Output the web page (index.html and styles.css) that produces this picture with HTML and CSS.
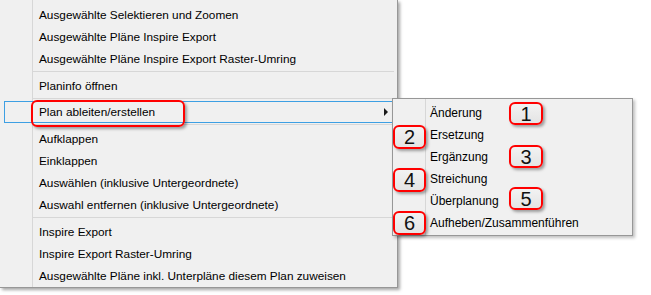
FILE: index.html
```html
<!DOCTYPE html>
<html lang="de">
<head>
<meta charset="utf-8">
<title>Kontextmenü</title>
<link rel="stylesheet" href="styles.css">
</head>
<body>
<div class="stage">
  <div class="menu main-menu">
    <div class="item">Ausgewählte Selektieren und Zoomen</div>
    <div class="item">Ausgewählte Pläne Inspire Export</div>
    <div class="item">Ausgewählte Pläne Inspire Export Raster-Umring</div>
    <div class="sep"></div>
    <div class="item">Planinfo öffnen</div>
    <div class="sep sep-short"></div>
    <div class="item item-active"><span>Plan ableiten/erstellen</span><span class="arrow"></span></div>
    <div class="sep"></div>
    <div class="item">Aufklappen</div>
    <div class="item">Einklappen</div>
    <div class="item">Auswählen (inklusive Untergeordnete)</div>
    <div class="item">Auswahl entfernen (inklusive Untergeordnete)</div>
    <div class="sep"></div>
    <div class="item">Inspire Export</div>
    <div class="item">Inspire Export Raster-Umring</div>
    <div class="item">Ausgewählte Pläne inkl. Unterpläne diesem Plan zuweisen</div>
  </div>

  <div class="menu sub-menu">
    <div class="item sub-item">Änderung</div>
    <div class="item sub-item">Ersetzung</div>
    <div class="item sub-item">Ergänzung</div>
    <div class="item sub-item">Streichung</div>
    <div class="item sub-item">Überplanung</div>
    <div class="item sub-item">Aufheben/Zusammenführen</div>
  </div>

  <div class="callout callout-main"></div>
  <div class="badge badge-right b1">1</div>
  <div class="badge badge-left b2">2</div>
  <div class="badge badge-right b3">3</div>
  <div class="badge badge-left b4">4</div>
  <div class="badge badge-right b5">5</div>
  <div class="badge badge-left b6">6</div>
</div>
</body>
</html>
```

FILE: styles.css
```css
* { box-sizing: border-box; }

html, body {
  margin: 0;
  padding: 0;
  background: #ffffff;
}

body {
  font-family: "Liberation Sans", Arial, sans-serif;
  font-size: 12px;
  color: #000;
}

.stage {
  position: relative;
  width: 651px;
  height: 295px;
  overflow: hidden;
}

.menu {
  background-color: #f0f0f0;
  background-image: linear-gradient(to right,
    transparent 32px, #d7d7d7 32px, #d7d7d7 33px, transparent 33px);
  display: flex;
  flex-direction: column;
}

.main-menu {
  width: 398px;
  padding-top: 4px;
  border-right: 1px solid #979797;
  border-bottom: 1px solid #979797;
  box-shadow: 2px 2px 3px rgba(0, 0, 0, 0.35);
  font-size: 11.8px;
}

.item {
  height: 22px;
  line-height: 22px;
  padding-left: 39px;
  white-space: nowrap;
}

.sep {
  height: 5px;
  padding-top: 1px;
  margin-left: 33px;
  margin-right: 3px;
}
.sep::before {
  content: "";
  display: block;
  height: 1px;
  background: #d7d7d7;
}
.sep-short { height: 4px; }

.item-active {
  display: flex;
  align-items: center;
  margin-left: 4px;
  margin-right: 4px;
  padding-left: 34px;
  padding-right: 4px;
  border: 1px solid #3d9fe3;
  line-height: 20px;
}

.arrow {
  margin-left: auto;
  width: 0;
  height: 0;
  border-top: 4px solid transparent;
  border-bottom: 4px solid transparent;
  border-left: 4px solid #1a1a1a;
}

/* flyout submenu */
.sub-menu {
  position: absolute;
  left: 392px;
  top: 98px;
  width: 241px;
  height: 138px;
  padding-top: 3px;
  border: 1px solid #979797;
  box-shadow: 2px 2px 3px rgba(0, 0, 0, 0.25);
}

.sub-item {
  padding-left: 37px;
}

/* red annotation overlays */
.callout {
  position: absolute;
  border: 2px solid #ff0000;
  border-radius: 6px;
  box-shadow: 2px 2px 3px rgba(0, 0, 0, 0.35);
}

.callout-main {
  left: 31px;
  top: 100px;
  width: 154px;
  height: 27px;
}

.badge {
  position: absolute;
  height: 24px;
  border: 2px solid #ff0000;
  border-radius: 6px;
  background: linear-gradient(#f2f2f2, #e4e4e4);
  box-shadow: 2px 2px 3px rgba(0, 0, 0, 0.35);
  font-family: "Liberation Sans", Arial, sans-serif;
  font-size: 20px;
  line-height: 20px;
  text-align: center;
  color: #111;
}

.badge-right { left: 509px; width: 34px; }
.badge-left  { left: 393px; width: 33px; }

.b1 { top: 102px; height: 23px; }
.b2 { top: 125px; }
.b3 { top: 145px; height: 23px; }
.b4 { top: 168px; }
.b5 { top: 187px; height: 23px; }
.b6 { top: 211px; }
```
